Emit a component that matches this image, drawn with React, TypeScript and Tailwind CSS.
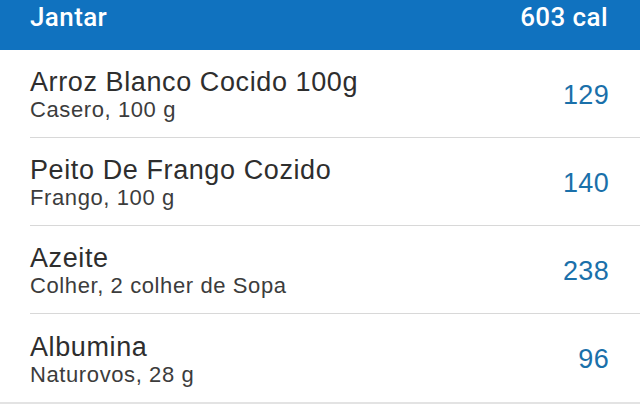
import React from 'react';

const items = [
  { name: 'Arroz Blanco Cocido 100g', detail: 'Casero, 100 g', cal: 129 },
  { name: 'Peito De Frango Cozido', detail: 'Frango, 100 g', cal: 140 },
  { name: 'Azeite', detail: 'Colher, 2 colher de Sopa', cal: 238 },
  { name: 'Albumina', detail: 'Naturovos, 28 g', cal: 96 },
];

const App: React.FC = () => {
  return (
    <div className="w-[640px] h-[404px] bg-[#e3e3e3] overflow-hidden" style={{ fontFamily: '"Liberation Sans", Arial, sans-serif' }}>
      <div
        className="h-[50px] bg-[#1072bf] flex items-center justify-between pl-[30px] pr-[32px] text-white text-[26px] font-medium tracking-[0.4px] pb-[16px]"
        style={{ fontFamily: 'Roboto, "Liberation Sans", sans-serif' }}
      >
        <span>Jantar</span>
        <span>603 cal</span>
      </div>
      <div className="bg-white">
        {items.map((it, i) => (
          <div key={i} className="pl-[30px]">
            <div className={`h-[88px] flex items-center justify-between pr-[31px] ${i < items.length - 1 ? 'border-b border-[#d8d8d8]' : ''}`}>
              <div className="flex flex-col pt-[3px]">
                <span className="text-[27px] leading-[30px] tracking-[0.6px] text-[#2e2e2e]">{it.name}</span>
                <span className="text-[22px] leading-[26px] tracking-[0.6px] text-[#3c3c3c]">{it.detail}</span>
              </div>
              <span className="text-[27px] tracking-[0.3px] text-[#1a70aa] mt-[3px]">{it.cal}</span>
            </div>
          </div>
        ))}
      </div>
    </div>
  );
};

export default App;
